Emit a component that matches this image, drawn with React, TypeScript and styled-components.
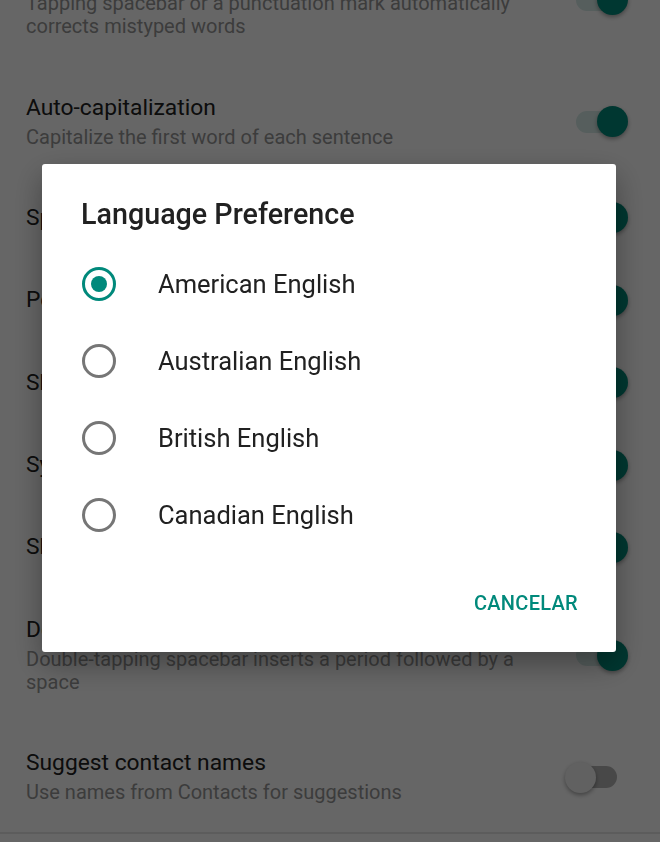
import styled, { createGlobalStyle } from "styled-components";

const GlobalStyle = createGlobalStyle`
  html, body {
    margin: 0;
    padding: 0;
    background: #ffffff;
    overflow: hidden;
  }
  body {
    font-family: Roboto, "Noto Sans", Arial, sans-serif;
    -webkit-font-smoothing: antialiased;
  }
`;

type Setting = {
  title: string;
  summary?: string;
  on: boolean;
};

const SETTINGS: Setting[] = [
  {
    title: "Auto-correction",
    summary:
      "Tapping spacebar or a punctuation mark automatically corrects mistyped words",
    on: true,
  },
  {
    title: "Auto-capitalization",
    summary: "Capitalize the first word of each sentence",
    on: true,
  },
  { title: "Spell check", on: true },
  { title: "Personalized suggestions", on: true },
  { title: "Show suggestion strip", on: true },
  { title: "Sync learned words", on: true },
  { title: "Show emoji suggestions", on: true },
  {
    title: "Double-space period",
    summary: "Double-tapping spacebar inserts a period followed by a space",
    on: true,
  },
  {
    title: "Suggest contact names",
    summary: "Use names from Contacts for suggestions",
    on: false,
  },
];

const LANGUAGES = [
  "American English",
  "Australian English",
  "British English",
  "Canadian English",
];

export default function App() {
  const selected = "American English";

  return (
    <>
      <GlobalStyle />
      <Page>
        <SettingsList>
          {SETTINGS.map((s) => (
            <SettingRow key={s.title}>
              <SettingText>
                <SettingTitle>{s.title}</SettingTitle>
                {s.summary && <SettingSummary>{s.summary}</SettingSummary>}
              </SettingText>
              <Switch $on={s.on}>
                <SwitchThumb $on={s.on} />
              </Switch>
            </SettingRow>
          ))}
        </SettingsList>
      </Page>

      <Scrim>
        <Dialog role="dialog">
          <DialogTitle>Language Preference</DialogTitle>
          <OptionList>
            {LANGUAGES.map((lang) => (
              <Option key={lang}>
                <Radio $checked={lang === selected} />
                <OptionLabel>{lang}</OptionLabel>
              </Option>
            ))}
          </OptionList>
          <DialogActions>
            <TextButton>CANCELAR</TextButton>
          </DialogActions>
        </Dialog>
      </Scrim>
    </>
  );
}

const Page = styled.div`
  width: 660px;
  height: 842px;
  background: #ffffff;
  overflow: hidden;
`;

const SettingsList = styled.div`
  display: flex;
  flex-direction: column;
  margin-top: -67px;
  border-bottom: 2px solid #e6e6e6;
`;

const SettingRow = styled.div`
  display: flex;
  align-items: center;
  padding: 28.2px 0 28.2px 26px;
`;

const SettingText = styled.div`
  flex: 1;
  display: flex;
  flex-direction: column;
  padding-right: 44px;
`;

const SettingTitle = styled.div`
  font-size: 22.8px;
  line-height: 26px;
  color: #212121;
`;

const SettingSummary = styled.div`
  margin-top: 5px;
  font-size: 20px;
  line-height: 23px;
  color: #979797;
`;

const Switch = styled.div<{ $on: boolean }>`
  position: relative;
  flex: none;
  width: 41px;
  height: 22px;
  margin-right: 43px;
  border-radius: 11px;
  background: ${(p) => (p.$on ? "#d6ebe8" : "#b4b4b4")};
`;

const SwitchThumb = styled.div<{ $on: boolean }>`
  position: absolute;
  top: 50%;
  left: ${(p) => (p.$on ? "21px" : "-11px")};
  width: 31px;
  height: 31px;
  margin-top: -15.5px;
  border-radius: 50%;
  background: ${(p) => (p.$on ? "#008a7a" : "#f2f2f2")};
  box-shadow: 0 2px 4px rgba(0, 0, 0, 0.35);
`;

const Scrim = styled.div`
  position: fixed;
  inset: 0;
  background: rgba(0, 0, 0, 0.6);
`;

const Dialog = styled.div`
  position: absolute;
  top: 164px;
  left: 42px;
  width: 574px;
  background: #ffffff;
  border-radius: 3px;
  box-shadow: 0 12px 30px rgba(0, 0, 0, 0.35);
  display: flex;
  flex-direction: column;
`;

const DialogTitle = styled.div`
  box-sizing: border-box;
  height: 81.5px;
  padding: 34px 39px 0;
  font-size: 28.7px;
  font-weight: 500;
  line-height: 32px;
  color: #212121;
`;

const OptionList = styled.div`
  display: flex;
  flex-direction: column;
`;

const Option = styled.div`
  display: flex;
  align-items: center;
  height: 77px;
  padding-left: 40px;
  gap: 42px;
`;

const Radio = styled.span<{ $checked: boolean }>`
  flex: none;
  box-sizing: border-box;
  width: 34px;
  height: 34px;
  border-radius: 50%;
  border: 3.5px solid ${(p) => (p.$checked ? "#00897b" : "#767676")};
  display: flex;
  align-items: center;
  justify-content: center;

  &::after {
    content: "";
    width: 16px;
    height: 16px;
    border-radius: 50%;
    background: #00897b;
    display: ${(p) => (p.$checked ? "block" : "none")};
  }
`;

const OptionLabel = styled.span`
  font-size: 25.5px;
  color: #212121;
`;

const DialogActions = styled.div`
  display: flex;
  justify-content: flex-end;
  padding: 24px;
`;

const TextButton = styled.button`
  height: 50px;
  padding: 0 14px;
  border: none;
  background: none;
  font-family: Roboto, "Noto Sans", Arial, sans-serif;
  font-size: 20px;
  font-weight: 500;
  letter-spacing: 0.3px;
  color: #00897b;
  cursor: pointer;
`;
